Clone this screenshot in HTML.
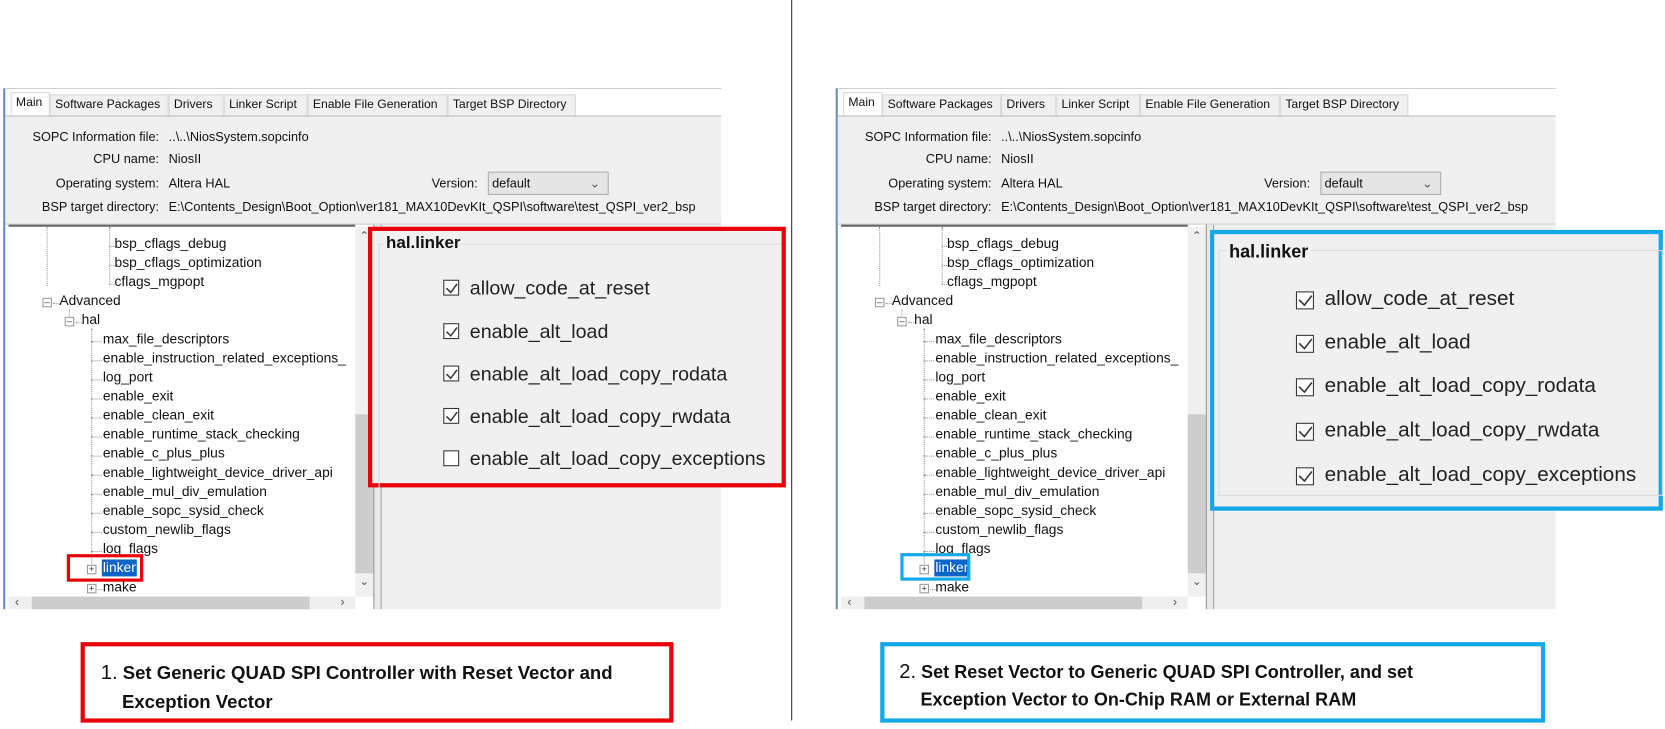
<!DOCTYPE html>
<html><head><meta charset="utf-8"><style>
*{margin:0;padding:0;box-sizing:border-box}
html,body{width:1665px;height:729px;overflow:hidden;background:#fff}
#w{position:absolute;left:0;top:0;width:1570px;height:688px;transform:scale(1.0605,1.0596);transform-origin:0 0;font-family:"Liberation Sans",sans-serif;color:#111}
.a{position:absolute}
.panel{position:absolute;top:83px;height:492px;background:#fff;border-left:2px solid #6c8ebf;border-top:1px solid #d0d0d0;overflow:hidden}
.tab{position:absolute;top:5px;height:20px;font-size:11.5px;line-height:19px;padding-left:4px;background:#f0f0f0;border:1px solid #d9d9d9;border-bottom:none;white-space:nowrap}
.info{position:absolute;left:0;right:0;top:25px;height:103px;background:#f0f0f0;border-top:1px solid #bbb;border-bottom:1px solid #ccc}
.lab{position:absolute;font-size:12px;white-space:nowrap;line-height:14px}
.tree{position:absolute;left:3px;top:128px;width:327px;height:351px;background:#fff;border-top:2px solid #666;overflow:hidden}
.t{position:absolute;font-size:13px;line-height:16px;white-space:nowrap;color:#111}
.dot{position:absolute;border-top:1px dotted #999;height:0}
.vd{position:absolute;border-left:1px dotted #999;width:0}
.pb{position:absolute;width:9px;height:9px;border:1px solid #999;background:#fff;font-size:9px;line-height:7px;text-align:center;color:#333}
.cb{position:absolute;width:15px;height:15px;border:1px solid #333;background:#fff}
.ov .txt{position:absolute;color:#222;white-space:nowrap}
.cap{position:absolute;font-size:17.5px;font-weight:bold;line-height:26px;white-space:nowrap}
</style></head><body><div id="w">

<div class="a" style="left:746px;top:0;width:1px;height:680px;background:#333"></div>

<!-- LEFT PANEL -->
<div class="panel" style="left:3px;width:677px">
 <div class="tab" style="left:5px;width:37px;background:#fff;top:3px;height:23px">Main</div>
 <div class="tab" style="left:42px;width:112px">Software Packages</div>
 <div class="tab" style="left:154px;width:52px">Drivers</div>
 <div class="tab" style="left:206px;width:79px">Linker Script</div>
 <div class="tab" style="left:285px;width:132px">Enable File Generation</div>
 <div class="tab" style="left:417px;width:121px">Target BSP Directory</div>
 <div class="info">
  <div class="lab" style="right:530px;top:12px">SOPC Information file:</div><div class="lab" style="left:154px;top:12px">..\..\NiosSystem.sopcinfo</div>
  <div class="lab" style="right:530px;top:33px">CPU name:</div><div class="lab" style="left:154px;top:33px">NiosII</div>
  <div class="lab" style="right:530px;top:56px">Operating system:</div><div class="lab" style="left:154px;top:56px">Altera HAL</div>
  <div class="lab" style="left:402px;top:56px">Version:</div>
  <div class="a" style="left:455px;top:52px;width:114px;height:22px;background:#e5e5e5;border:1px solid #adadad;font-size:12px;line-height:20px;padding-left:3px">default<span class="a" style="right:7px;top:0;color:#555">&#8964;</span></div>
  <div class="lab" style="right:530px;top:78px">BSP target directory:</div><div class="lab" style="left:154px;top:78px">E:\Contents_Design\Boot_Option\ver181_MAX10DevKIt_QSPI\software\test_QSPI_ver2_bsp</div>
 </div>
 <div class="tree">
  <div class="vd" style="left:36px;top:0;height:56px"></div>
  <div class="vd" style="left:95px;top:0;height:54px"></div>
  <div class="dot" style="left:95px;top:18px;width:5px"></div><div class="t" style="left:100px;top:8px">bsp_cflags_debug</div>
  <div class="dot" style="left:95px;top:36px;width:5px"></div><div class="t" style="left:100px;top:26px">bsp_cflags_optimization</div>
  <div class="dot" style="left:95px;top:54px;width:5px"></div><div class="t" style="left:100px;top:44px">cflags_mgpopt</div>
  <div class="pb" style="left:32px;top:67px">&#8211;</div><div class="dot" style="left:42px;top:72px;width:6px"></div><div class="t" style="left:48px;top:62px">Advanced</div>
  <div class="vd" style="left:57px;top:78px;height:6px"></div>
  <div class="pb" style="left:53px;top:85px">&#8211;</div><div class="dot" style="left:63px;top:90px;width:6px"></div><div class="t" style="left:69px;top:80px">hal</div>
  <div class="vd" style="left:78px;top:96px;height:222px"></div>
  <div class="dot" style="left:78px;top:108px;width:10px"></div><div class="t" style="left:89px;top:98px">max_file_descriptors</div>
  <div class="dot" style="left:78px;top:126px;width:10px"></div><div class="t" style="left:89px;top:116px">enable_instruction_related_exceptions_</div>
  <div class="dot" style="left:78px;top:144px;width:10px"></div><div class="t" style="left:89px;top:134px">log_port</div>
  <div class="dot" style="left:78px;top:162px;width:10px"></div><div class="t" style="left:89px;top:152px">enable_exit</div>
  <div class="dot" style="left:78px;top:180px;width:10px"></div><div class="t" style="left:89px;top:170px">enable_clean_exit</div>
  <div class="dot" style="left:78px;top:198px;width:10px"></div><div class="t" style="left:89px;top:188px">enable_runtime_stack_checking</div>
  <div class="dot" style="left:78px;top:216px;width:10px"></div><div class="t" style="left:89px;top:206px">enable_c_plus_plus</div>
  <div class="dot" style="left:78px;top:234px;width:10px"></div><div class="t" style="left:89px;top:224px">enable_lightweight_device_driver_api</div>
  <div class="dot" style="left:78px;top:252px;width:10px"></div><div class="t" style="left:89px;top:242px">enable_mul_div_emulation</div>
  <div class="dot" style="left:78px;top:270px;width:10px"></div><div class="t" style="left:89px;top:260px">enable_sopc_sysid_check</div>
  <div class="dot" style="left:78px;top:288px;width:10px"></div><div class="t" style="left:89px;top:278px">custom_newlib_flags</div>
  <div class="dot" style="left:78px;top:306px;width:10px"></div><div class="t" style="left:89px;top:296px">log_flags</div>
  <div class="pb" style="left:74px;top:319px">+</div><div class="t" style="left:88px;top:314px;background:#0a64c8;color:#fff;padding:0 1px">linker</div>
  <div class="pb" style="left:74px;top:337px">+</div><div class="dot" style="left:84px;top:342px;width:5px"></div><div class="t" style="left:89px;top:332px">make</div>
 </div>
 <div class="a" style="left:330px;top:130px;width:17px;height:349px;background:#f0f0f0"><div class="a" style="left:0;top:177px;width:17px;height:150px;background:#cdcdcd"></div><div class="a" style="left:4px;top:2px;font-size:11px;color:#555">&#8963;</div><div class="a" style="left:4px;top:328px;font-size:11px;color:#555">&#8964;</div></div>
 <div class="a" style="left:3px;top:479px;width:327px;height:13px;background:#f0f0f0"><div class="a" style="left:22px;top:0;width:262px;height:13px;background:#cdcdcd"></div><div class="a" style="left:6px;top:-2px;font-size:12px;color:#555">&#8249;</div><div class="a" style="left:313px;top:-2px;font-size:12px;color:#555">&#8250;</div></div>
 <div class="a" style="left:347px;top:128px;width:8px;height:364px;background:#e8e8e8;border-left:1px solid #999;border-right:1px solid #999"></div>
 <div class="a" style="left:355px;top:128px;right:0;height:364px;background:#f0f0f0"></div>
</div>

<!-- RIGHT PANEL -->
<div class="panel" style="left:788px;width:679px">
 <div class="tab" style="left:5px;width:37px;background:#fff;top:3px;height:23px">Main</div>
 <div class="tab" style="left:42px;width:112px">Software Packages</div>
 <div class="tab" style="left:154px;width:52px">Drivers</div>
 <div class="tab" style="left:206px;width:79px">Linker Script</div>
 <div class="tab" style="left:285px;width:132px">Enable File Generation</div>
 <div class="tab" style="left:417px;width:121px">Target BSP Directory</div>
 <div class="info">
  <div class="lab" style="right:532px;top:12px">SOPC Information file:</div><div class="lab" style="left:154px;top:12px">..\..\NiosSystem.sopcinfo</div>
  <div class="lab" style="right:532px;top:33px">CPU name:</div><div class="lab" style="left:154px;top:33px">NiosII</div>
  <div class="lab" style="right:532px;top:56px">Operating system:</div><div class="lab" style="left:154px;top:56px">Altera HAL</div>
  <div class="lab" style="left:402px;top:56px">Version:</div>
  <div class="a" style="left:455px;top:52px;width:114px;height:22px;background:#e5e5e5;border:1px solid #adadad;font-size:12px;line-height:20px;padding-left:3px">default<span class="a" style="right:7px;top:0;color:#555">&#8964;</span></div>
  <div class="lab" style="right:532px;top:78px">BSP target directory:</div><div class="lab" style="left:154px;top:78px">E:\Contents_Design\Boot_Option\ver181_MAX10DevKIt_QSPI\software\test_QSPI_ver2_bsp</div>
 </div>
 <div class="tree">
  <div class="vd" style="left:36px;top:0;height:56px"></div>
  <div class="vd" style="left:95px;top:0;height:54px"></div>
  <div class="dot" style="left:95px;top:18px;width:5px"></div><div class="t" style="left:100px;top:8px">bsp_cflags_debug</div>
  <div class="dot" style="left:95px;top:36px;width:5px"></div><div class="t" style="left:100px;top:26px">bsp_cflags_optimization</div>
  <div class="dot" style="left:95px;top:54px;width:5px"></div><div class="t" style="left:100px;top:44px">cflags_mgpopt</div>
  <div class="pb" style="left:32px;top:67px">&#8211;</div><div class="dot" style="left:42px;top:72px;width:6px"></div><div class="t" style="left:48px;top:62px">Advanced</div>
  <div class="vd" style="left:57px;top:78px;height:6px"></div>
  <div class="pb" style="left:53px;top:85px">&#8211;</div><div class="dot" style="left:63px;top:90px;width:6px"></div><div class="t" style="left:69px;top:80px">hal</div>
  <div class="vd" style="left:78px;top:96px;height:222px"></div>
  <div class="dot" style="left:78px;top:108px;width:10px"></div><div class="t" style="left:89px;top:98px">max_file_descriptors</div>
  <div class="dot" style="left:78px;top:126px;width:10px"></div><div class="t" style="left:89px;top:116px">enable_instruction_related_exceptions_</div>
  <div class="dot" style="left:78px;top:144px;width:10px"></div><div class="t" style="left:89px;top:134px">log_port</div>
  <div class="dot" style="left:78px;top:162px;width:10px"></div><div class="t" style="left:89px;top:152px">enable_exit</div>
  <div class="dot" style="left:78px;top:180px;width:10px"></div><div class="t" style="left:89px;top:170px">enable_clean_exit</div>
  <div class="dot" style="left:78px;top:198px;width:10px"></div><div class="t" style="left:89px;top:188px">enable_runtime_stack_checking</div>
  <div class="dot" style="left:78px;top:216px;width:10px"></div><div class="t" style="left:89px;top:206px">enable_c_plus_plus</div>
  <div class="dot" style="left:78px;top:234px;width:10px"></div><div class="t" style="left:89px;top:224px">enable_lightweight_device_driver_api</div>
  <div class="dot" style="left:78px;top:252px;width:10px"></div><div class="t" style="left:89px;top:242px">enable_mul_div_emulation</div>
  <div class="dot" style="left:78px;top:270px;width:10px"></div><div class="t" style="left:89px;top:260px">enable_sopc_sysid_check</div>
  <div class="dot" style="left:78px;top:288px;width:10px"></div><div class="t" style="left:89px;top:278px">custom_newlib_flags</div>
  <div class="dot" style="left:78px;top:306px;width:10px"></div><div class="t" style="left:89px;top:296px">log_flags</div>
  <div class="pb" style="left:74px;top:319px">+</div><div class="t" style="left:88px;top:314px;background:#0a64c8;color:#fff;padding:0 1px">linker</div>
  <div class="pb" style="left:74px;top:337px">+</div><div class="dot" style="left:84px;top:342px;width:5px"></div><div class="t" style="left:89px;top:332px">make</div>
 </div>
 <div class="a" style="left:330px;top:130px;width:17px;height:349px;background:#f0f0f0"><div class="a" style="left:0;top:177px;width:17px;height:150px;background:#cdcdcd"></div><div class="a" style="left:4px;top:2px;font-size:11px;color:#555">&#8963;</div><div class="a" style="left:4px;top:328px;font-size:11px;color:#555">&#8964;</div></div>
 <div class="a" style="left:3px;top:479px;width:327px;height:13px;background:#f0f0f0"><div class="a" style="left:22px;top:0;width:262px;height:13px;background:#cdcdcd"></div><div class="a" style="left:6px;top:-2px;font-size:12px;color:#555">&#8249;</div><div class="a" style="left:313px;top:-2px;font-size:12px;color:#555">&#8250;</div></div>
 <div class="a" style="left:347px;top:128px;width:8px;height:364px;background:#e8e8e8;border-left:1px solid #999;border-right:1px solid #999"></div>
 <div class="a" style="left:355px;top:128px;right:0;height:364px;background:#f0f0f0"></div>
</div>

<!-- RED overlay -->
<div class="a ov" style="left:347px;top:214px;width:394px;height:246px;border:4px solid #e8000b;background:#f0f0f0">
 <div class="a" style="left:6px;top:12px;width:380px;height:230px;border:1px solid #dcdcdc;border-bottom:none;border-right:none"></div>
 <div class="txt" style="left:11px;top:3px;font-size:16px;font-weight:bold;background:#f0f0f0;padding:0 2px;color:#111">hal.linker</div>
 <div class="cb" style="left:67px;top:46px"></div><div class="txt" style="left:92px;top:43px;font-size:18.5px">allow_code_at_reset</div>
 <div class="cb" style="left:67px;top:87px"></div><div class="txt" style="left:92px;top:84px;font-size:18.5px">enable_alt_load</div>
 <div class="cb" style="left:67px;top:127px"></div><div class="txt" style="left:92px;top:124px;font-size:18.5px">enable_alt_load_copy_rodata</div>
 <div class="cb" style="left:67px;top:167px"></div><div class="txt" style="left:92px;top:164px;font-size:18.5px">enable_alt_load_copy_rwdata</div>
 <div class="cb" style="left:67px;top:207px"></div><div class="txt" style="left:92px;top:204px;font-size:18.5px">enable_alt_load_copy_exceptions</div>
 <svg class="a" style="left:67px;top:0" width="16" height="200"><g fill="none" stroke="#333" stroke-width="1.4"><path d="M3 54 L7 58 L13 50"/><path d="M3 95 L7 99 L13 91"/><path d="M3 135 L7 139 L13 131"/><path d="M3 175 L7 179 L13 171"/></g></svg>
</div>

<!-- BLUE overlay -->
<div class="a ov" style="left:1141px;top:217px;width:427px;height:265px;border:4px solid #14a8e6;background:#f0f0f0">
 <div class="a" style="left:4px;top:15px;width:419px;height:232px;border:1px solid #dcdcdc"></div>
 <div class="txt" style="left:12px;top:7px;font-size:17px;font-weight:bold;background:#f0f0f0;padding:0 2px;color:#111">hal.linker</div>
 <div class="cb" style="left:77px;top:54px;width:17px;height:17px"></div><div class="txt" style="left:104px;top:50px;font-size:19.5px">allow_code_at_reset</div>
 <div class="cb" style="left:77px;top:95px;width:17px;height:17px"></div><div class="txt" style="left:104px;top:91px;font-size:19.5px">enable_alt_load</div>
 <div class="cb" style="left:77px;top:136px;width:17px;height:17px"></div><div class="txt" style="left:104px;top:132px;font-size:19.5px">enable_alt_load_copy_rodata</div>
 <div class="cb" style="left:77px;top:178px;width:17px;height:17px"></div><div class="txt" style="left:104px;top:174px;font-size:19.5px">enable_alt_load_copy_rwdata</div>
 <div class="cb" style="left:77px;top:220px;width:17px;height:17px"></div><div class="txt" style="left:104px;top:216px;font-size:19.5px">enable_alt_load_copy_exceptions</div>
 <svg class="a" style="left:77px;top:0" width="18" height="240"><g fill="none" stroke="#333" stroke-width="1.5"><path d="M3 62 L8 67 L15 58"/><path d="M3 103 L8 108 L15 99"/><path d="M3 144 L8 149 L15 140"/><path d="M3 186 L8 191 L15 182"/><path d="M3 228 L8 233 L15 224"/></g></svg>
</div>

<!-- small highlight boxes -->
<div class="a" style="left:63px;top:523px;width:72px;height:26px;border:3px solid #e8000b"></div>
<div class="a" style="left:849px;top:522px;width:66px;height:26px;border:3px solid #14a8e6"></div>

<!-- captions -->
<div class="a" style="left:76px;top:606px;width:559px;height:76px;border:4px solid #e8000b;background:#fff">
 <div class="cap" style="left:15px;top:12px"><span style="font-weight:normal;font-size:19px">1.</span> Set Generic QUAD SPI Controller with Reset Vector and<br><span style="padding-left:20px">Exception Vector</span></div>
</div>
<div class="a" style="left:830px;top:606px;width:627px;height:76px;border:4px solid #14a8e6;background:#fff">
 <div class="cap" style="left:14px;top:12px;font-size:17px"><span style="font-weight:normal;font-size:19px">2.</span> Set Reset Vector to Generic QUAD SPI Controller, and set<br><span style="padding-left:20px">Exception Vector to On-Chip RAM or External RAM</span></div>
</div>

</div></body></html>
